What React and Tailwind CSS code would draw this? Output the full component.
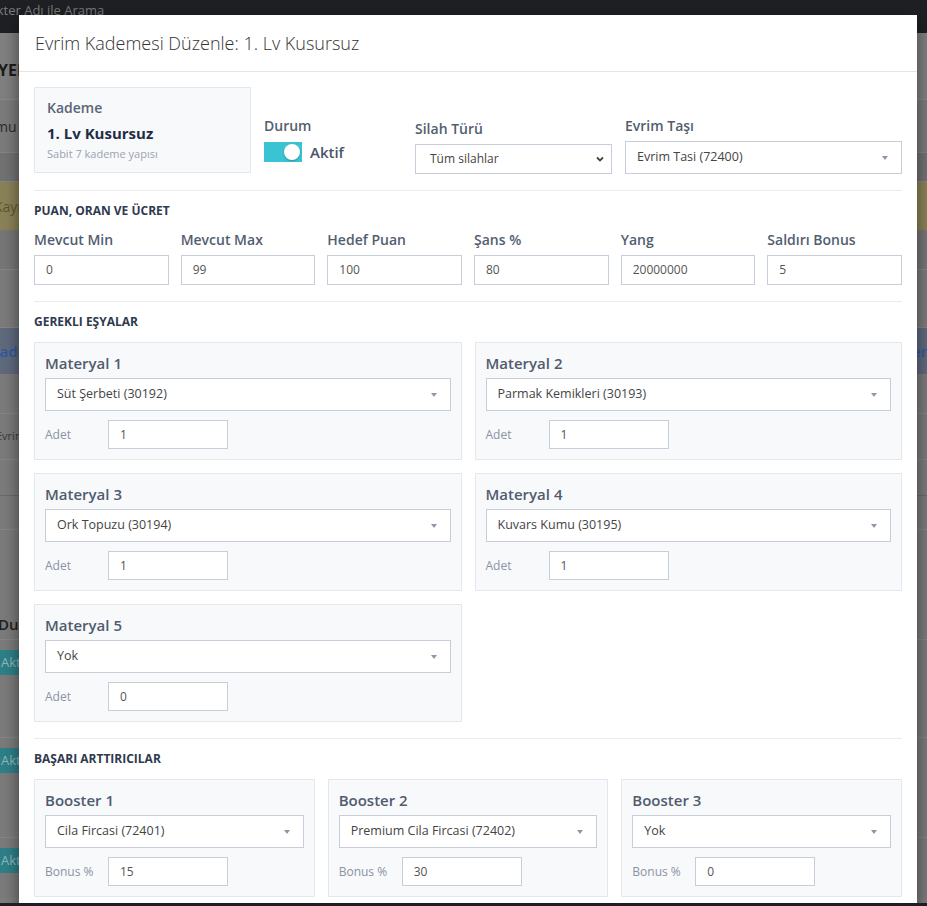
import React from "react";

const FONT = { fontFamily: '"Open Sans", "Noto Sans", "Liberation Sans", sans-serif' };

function Arrow() {
  return (
    <svg width="6" height="4" viewBox="0 0 6 4" className="shrink-0">
      <path d="M0 0 L6 0 L3 4 Z" fill="#8d98a9" />
    </svg>
  );
}

function Select2({ value }) {
  return (
    <div className="flex h-[33px] items-center justify-between border border-[#c7ced9] bg-white pl-[11px] pr-[13px] text-[12.5px] text-[#444]">
      <span>{value}</span>
      <Arrow />
    </div>
  );
}

function Input({ value, className = "" }) {
  return (
    <div className={"flex items-center border border-[#c7ced9] bg-white px-[11px] text-[12px] text-[#555] " + className}>
      {value}
    </div>
  );
}

function ItemCard({ title, value, label, amount }) {
  return (
    <div className="border border-[#e3e7ee] bg-[#f8f9fb] p-[10px]">
      <div className="text-[15px] font-semibold leading-5 text-[#505c6e]">{title}</div>
      <div className="mt-[5px]">
        <Select2 value={value} />
      </div>
      <div className="mt-[9px] flex items-center">
        <div className="w-[63px] text-[12px] text-[#8a93a3]">{label}</div>
        <Input value={amount} className="h-[29px] w-[120px] pl-[11px]" />
      </div>
    </div>
  );
}

function Heading({ children }) {
  return <div className="text-[12px] font-bold leading-4 text-[#2f3a4f]">{children}</div>;
}

function Divider({ className = "" }) {
  return <div className={"h-px bg-[#e9edf2] " + className} />;
}

function Badge() {
  return (
    <div className="flex h-[25px] w-[40px] items-center bg-[#2e8088] pl-[1px] text-[13px] text-[#8fb9bd]">Aktif</div>
  );
}

export default function App() {
  const fields = [
    ["Mevcut Min", "0"],
    ["Mevcut Max", "99"],
    ["Hedef Puan", "100"],
    ["Şans %", "80"],
    ["Yang", "20000000"],
    ["Saldırı Bonus", "5"],
  ];
  const materials = [
    ["Materyal 1", "Süt Şerbeti (30192)", "1"],
    ["Materyal 2", "Parmak Kemikleri (30193)", "1"],
    ["Materyal 3", "Ork Topuzu (30194)", "1"],
    ["Materyal 4", "Kuvars Kumu (30195)", "1"],
    ["Materyal 5", "Yok", "0"],
  ];
  const boosters = [
    ["Booster 1", "Cila Fircasi (72401)", "15"],
    ["Booster 2", "Premium Cila Fircasi (72402)", "30"],
    ["Booster 3", "Yok", "0"],
  ];

  return (
    <div className="relative h-[906px] w-[927px] overflow-hidden bg-[#7d7d7d]" style={FONT}>
      {/* dimmed page behind the modal */}
      <div className="flex flex-col">
        <div className="h-[33px] overflow-hidden bg-[#1f2023] pt-[1px]">
          <div className="ml-[-31px] whitespace-nowrap text-[13px] text-[#7b7c7e]">Karakter Adı ile Arama</div>
        </div>
        <div className="flex h-[67px] items-center border-b border-[#8a8a8a] bg-[#808080] pt-[8px]">
          <div className="ml-[-2px] text-[16px] font-bold text-[#1c1c1c]">YENİ</div>
        </div>
        <div className="flex h-[52px] items-center bg-[#7b7b7b]">
          <div className="ml-[-38px] text-[14px] text-[#2a2a2a]">Durumu</div>
        </div>
        <div className="h-[30px] border-y border-[#858585] bg-[#727272]" />
        <div className="flex h-[48px] items-center bg-[#8a8257]">
          <div className="ml-[-6px] text-[14px] text-[#5e5530]">Kayıt</div>
        </div>
        <div className="h-[40px] border-b border-[#858585] bg-[#767676]" />
        <div className="h-[58px] border-b border-[#858585] bg-[#7b7b7b]" />
        <div className="flex h-[46px] items-center justify-between bg-[#5f6a7d]">
          <div className="ml-[-10px] text-[15px] font-semibold text-[#2e5a9e]">Kadem</div>
          <div className="mr-[-8px] text-[15px] font-semibold text-[#2e5a9e]">Kadem</div>
        </div>
        <div className="h-[40px] border-b border-[#858585] bg-[#7b7b7b]" />
        <div className="flex h-[46px] items-center border-b border-[#858585] bg-[#7b7b7b]">
          <div className="ml-[-4px] text-[11px] text-[#3a3a3a]">Evrim</div>
        </div>
        <div className="h-[36px] border-b border-[#6a6a6a] bg-[#7b7b7b]" />
        <div className="h-[34px] border-b border-[#858585] bg-[#7b7b7b]" />
        <div className="h-[80px] bg-[#7b7b7b]" />
        <div className="flex h-[30px] items-center border-b border-[#858585] bg-[#7b7b7b]">
          <div className="ml-[-2px] text-[15px] font-semibold text-[#222]">Durum</div>
        </div>
        <div className="flex h-[98px] items-start border-b border-[#858585] bg-[#7b7b7b] pt-[10px]">
          <Badge />
        </div>
        <div className="flex h-[100px] items-start border-b border-[#858585] bg-[#7b7b7b] pt-[10px]">
          <Badge />
        </div>
        <div className="flex h-[60px] items-start bg-[#7b7b7b] pt-[10px]">
          <Badge />
        </div>
      </div>

      {/* modal */}
      <div className="absolute left-[19px] top-[15px] w-[898px] bg-white shadow-[0_5px_15px_rgba(0,0,0,0.5)]">
        <div className="border-b border-[#e5e5e5] px-[16px] py-[15px]">
          <div className="text-[18px] font-light leading-[26px] text-[#333]">Evrim Kademesi Düzenle: 1. Lv Kusursuz</div>
        </div>
        <div className="p-[15px]">
          <div className="grid grid-cols-[217px_138px_197px_1fr] items-end gap-x-[13px]">
            <div className="border border-[#e3e7ee] bg-[#f8f9fb] px-3 pb-[10px] pt-[10px]">
              <div className="text-[14px] font-semibold leading-5 text-[#5a6577]">Kademe</div>
              <div className="mt-[5px] text-[15px] font-bold leading-5 text-[#1f2d45]">1. Lv Kusursuz</div>
              <div className="mt-[3px] text-[11px] leading-4 text-[#9aa3b2]">Sabit 7 kademe yapısı</div>
            </div>
            <div className="mb-[10px]">
              <div className="text-[14px] font-semibold leading-5 text-[#525e70]">Durum</div>
              <div className="mt-[5px] flex items-center">
                <div className="relative h-5 w-[38px] bg-[#3ac3d2]">
                  <div className="absolute right-[2px] top-[2px] h-4 w-4 rounded-full bg-white shadow-[0_1px_2px_rgba(0,0,0,0.25)]" />
                </div>
                <div className="ml-2 text-[15px] font-semibold text-[#4a5568]">Aktif</div>
              </div>
            </div>
            <div className="mb-[-1px]">
              <div className="text-[14px] font-semibold leading-5 text-[#525e70]">Silah Türü</div>
              <div className="mt-[5px] flex h-[30px] items-center justify-between border border-[#c7ced9] bg-white pl-[14px] pr-[7px] text-[12px] text-[#444]">
                <span>Tüm silahlar</span>
                <svg width="8" height="6" viewBox="0 0 8 6">
                  <path d="M1 1.5 L4 4.5 L7 1.5" fill="none" stroke="#444" strokeWidth="1.8" />
                </svg>
              </div>
            </div>
            <div className="mb-[-1px]">
              <div className="text-[14px] font-semibold leading-5 text-[#525e70]">Evrim Taşı</div>
              <div className="mt-[5px]">
                <Select2 value="Evrim Tasi (72400)" />
              </div>
            </div>
          </div>

          <Divider className="mt-[17px]" />

          <div className="mt-[12px]">
            <Heading>PUAN, ORAN VE ÜCRET</Heading>
          </div>
          <div className="mt-[11px] grid grid-cols-6 gap-x-3">
            {fields.map(([l, v]) => (
              <div key={l}>
                <div className="text-[14px] font-semibold leading-5 text-[#525e70]">{l}</div>
                <Input value={v} className="mt-[5px] h-[30px]" />
              </div>
            ))}
          </div>

          <Divider className="mt-[16px]" />

          <div className="mt-[12px]">
            <Heading>GEREKLI EŞYALAR</Heading>
          </div>
          <div className="mt-[12px] grid grid-cols-2 gap-x-[13px] gap-y-[13px]">
            {materials.map(([t, v, a]) => (
              <ItemCard key={t} title={t} value={v} label="Adet" amount={a} />
            ))}
          </div>

          <Divider className="mt-[16px]" />

          <div className="mt-[12px]">
            <Heading>BAŞARI ARTTIRICILAR</Heading>
          </div>
          <div className="mt-[12px] grid grid-cols-3 gap-x-[13px]">
            {boosters.map(([t, v, a]) => (
              <ItemCard key={t} title={t} value={v} label="Bonus %" amount={a} />
            ))}
          </div>
          <div className="h-[60px]" />
        </div>
      </div>

      <div className="absolute bottom-0 left-0 h-[3px] w-full bg-[#1f1f21]" />
    </div>
  );
}
